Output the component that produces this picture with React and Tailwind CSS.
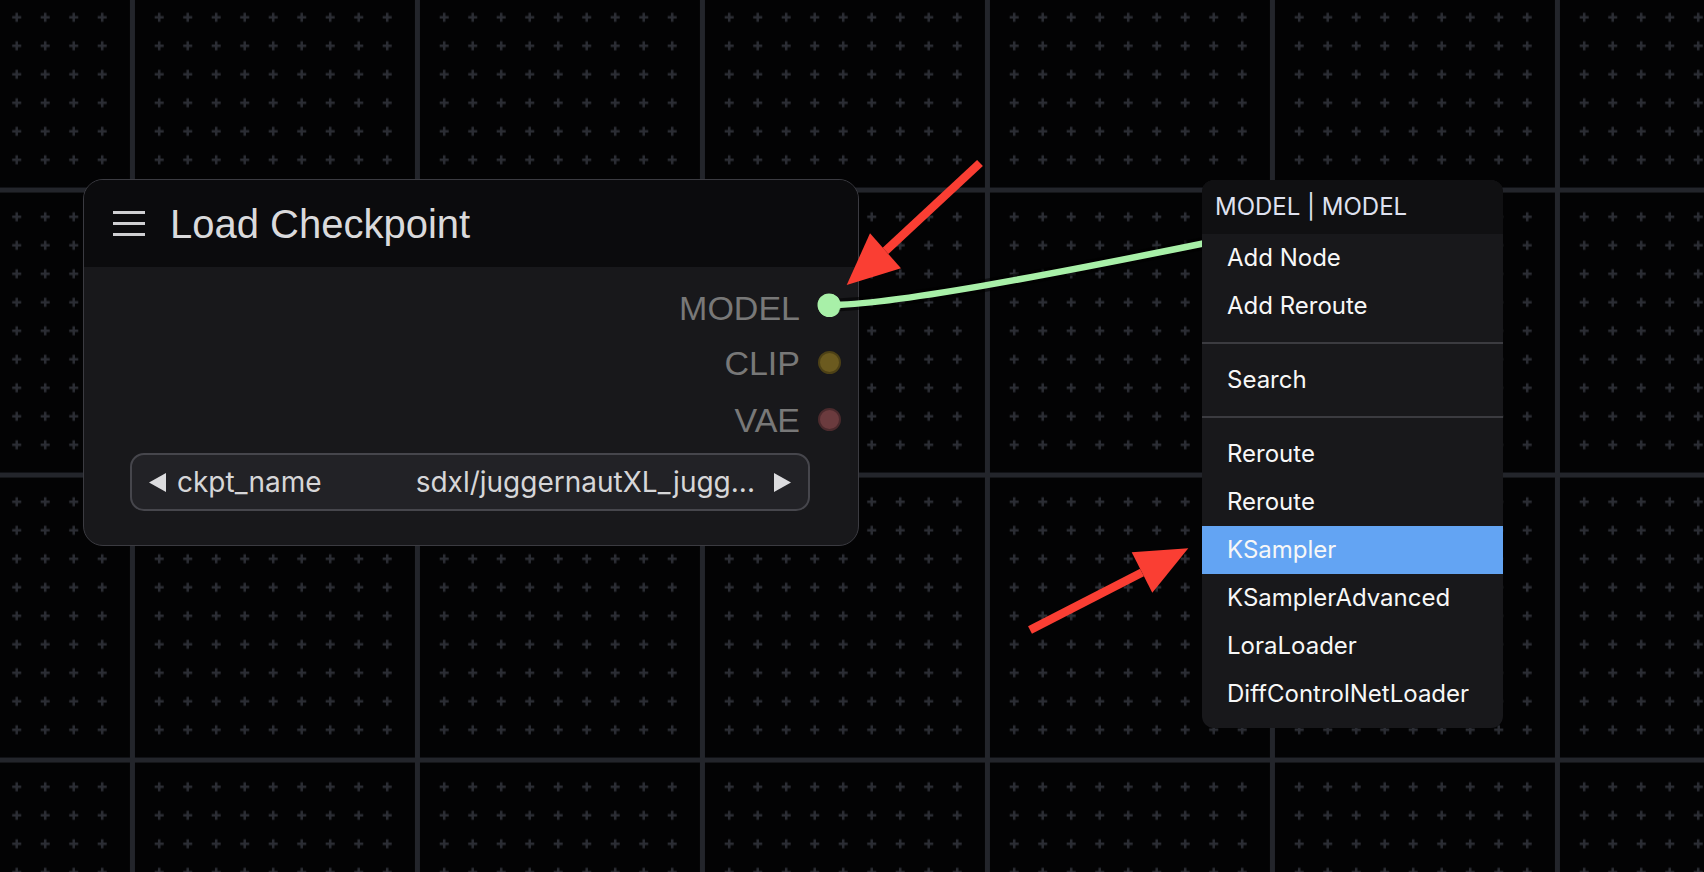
import React from 'react';

const outputs = [
  { name: 'MODEL', dot: 'bg-[#a8f0a8] border-[#a8f0a8]', shift: 'mt-[4px]' },
  { name: 'CLIP', dot: 'bg-[#6b5a1f] border-[#4d4116]', shift: 'mt-[1px]' },
  { name: 'VAE', dot: 'bg-[#6b3b3e] border-[#4b2a2d]', shift: 'mt-[1px]' },
];

const menuGroups = [
  ['Add Node', 'Add Reroute'],
  ['Search'],
  ['Reroute', 'Reroute', 'KSampler', 'KSamplerAdvanced', 'LoraLoader', 'DiffControlNetLoader'],
];

function CanvasGrid() {
  const crosses = [];
  for (let i = 0; i < 10; i++) {
    for (let j = 0; j < 10; j++) {
      if (i === 5 || j === 5) continue;
      const cx = 14.25 + i * 28.5;
      const cy = 14.25 + j * 28.5;
      crosses.push(
        <g key={`${i}-${j}`} fill="#2b2d34">
          <rect x={cx - 4.5} y={cy - 1.25} width="9" height="2.5" />
          <rect x={cx - 1.25} y={cy - 4.5} width="2.5" height="9" />
        </g>
      );
    }
  }
  return (
    <svg className="absolute inset-0" width="1704" height="872">
      <defs>
        <pattern id="grid" x="-26.05" y="31.55" width="285" height="285" patternUnits="userSpaceOnUse">
          {crosses}
          <rect x="156" y="0" width="5" height="285" fill="#23252b" />
          <rect x="0" y="156" width="285" height="5" fill="#23252b" />
        </pattern>
      </defs>
      <rect width="1704" height="872" fill="url(#grid)" />
    </svg>
  );
}

function Arrow({ tail, tip, a, b }) {
  const base = [(a[0] + b[0]) / 2, (a[1] + b[1]) / 2];
  return (
    <g fill="#fa3e33" stroke="#fa3e33">
      <line x1={tail[0]} y1={tail[1]} x2={base[0]} y2={base[1]} strokeWidth="8.5" />
      <polygon points={`${tip.join(',')} ${a.join(',')} ${b.join(',')}`} strokeWidth="0" />
    </g>
  );
}

export default function App() {
  return (
    <div className="relative w-[1704px] h-[872px] overflow-hidden bg-[#030304]">
      <CanvasGrid />

      {/* Load Checkpoint node */}
      <div className="absolute left-[83px] top-[179px] w-[776px] h-[367px] rounded-[20px] border border-[#3b3b41] bg-[#18181b] overflow-hidden flex flex-col">
        <div className="h-[87px] shrink-0 bg-[#0b0b0d] flex items-center pl-[29px] gap-[25px]">
          <div className="flex flex-col gap-[8px] w-[32px]">
            <span className="block h-[3px] bg-[#cfcfd2]" />
            <span className="block h-[3px] bg-[#cfcfd2]" />
            <span className="block h-[3px] bg-[#cfcfd2]" />
          </div>
          <span className="text-[40px] leading-none text-[#dadadc] font-['Liberation_Sans',Arial,sans-serif]">
            Load Checkpoint
          </span>
        </div>
        <div className="flex flex-col items-end pt-[10px] pr-[17px]">
          {outputs.map((o) => (
            <div key={o.name} className="h-[57px] flex items-center gap-[18px]">
              <span className={`text-[34px] leading-none text-[#787878] font-['Liberation_Sans',Arial,sans-serif] ${o.shift}`}>
                {o.name}
              </span>
              <span className={`block w-[23px] h-[23px] rounded-full border-2 ${o.dot}`} />
            </div>
          ))}
        </div>
        <div className="mt-[5px] ml-[46px] mr-[48px] h-[58px] rounded-[14px] border-2 border-[#46464c] bg-[#222226] flex items-center pl-[17px] pr-[17px] font-['Inter',sans-serif] text-[28px] text-[#d6d6d8]">
          <svg width="17" height="19" viewBox="0 0 17 19"><polygon points="17,0 17,19 0,9.5" fill="#dcdcde" /></svg>
          <span className="ml-[11px]">ckpt_name</span>
          <span className="ml-auto">sdxl/juggernautXL_jugg...</span>
          <svg className="ml-[19px]" width="17" height="19" viewBox="0 0 17 19"><polygon points="0,0 0,19 17,9.5" fill="#dcdcde" /></svg>
        </div>
      </div>

      {/* link */}
      <svg className="absolute inset-0 pointer-events-none" width="1704" height="872">
        <path d="M829 305 C 890 305, 1040 277, 1240 236" fill="none" stroke="#000" strokeOpacity="0.55" strokeWidth="13" />
        <path d="M829 305 C 890 305, 1040 277, 1240 236" fill="none" stroke="#a8f0a8" strokeWidth="6.5" />
        <circle cx="829" cy="305" r="11.5" fill="#a8f0a8" />
      </svg>

      {/* context menu */}
      <div className="absolute left-[1202px] top-[180px] w-[301px] rounded-[12px] overflow-hidden bg-[#18181b] pb-[10px] font-['Inter',sans-serif]">
        <div className="h-[54px] bg-[#101012] flex items-center pl-[13px] text-[24px] text-[#dfe1ef]">
          MODEL | MODEL
        </div>
        {menuGroups.map((group, gi) => (
          <div key={gi}>
            {gi > 0 && <div className="my-[12px] h-[2px] bg-[#3b3b40]" />}
            {group.map((item, ii) => (
              <div
                key={ii}
                className={`h-[48px] flex items-center pl-[25px] text-[24px] text-[#f7f7f7] ${item === 'KSampler' ? 'bg-[#63a4f3]' : ''}`}
              >
                {item}
              </div>
            ))}
          </div>
        ))}
      </div>

      {/* annotation arrows */}
      <svg className="absolute inset-0 pointer-events-none" width="1704" height="872">
        <Arrow tail={[980, 163]} tip={[846.7, 285]} a={[870, 233.3]} b={[901, 268.3]} />
        <Arrow tail={[1030, 630]} tip={[1188.3, 548.3]} a={[1131.7, 552.3]} b={[1152.3, 592.7]} />
      </svg>
    </div>
  );
}
